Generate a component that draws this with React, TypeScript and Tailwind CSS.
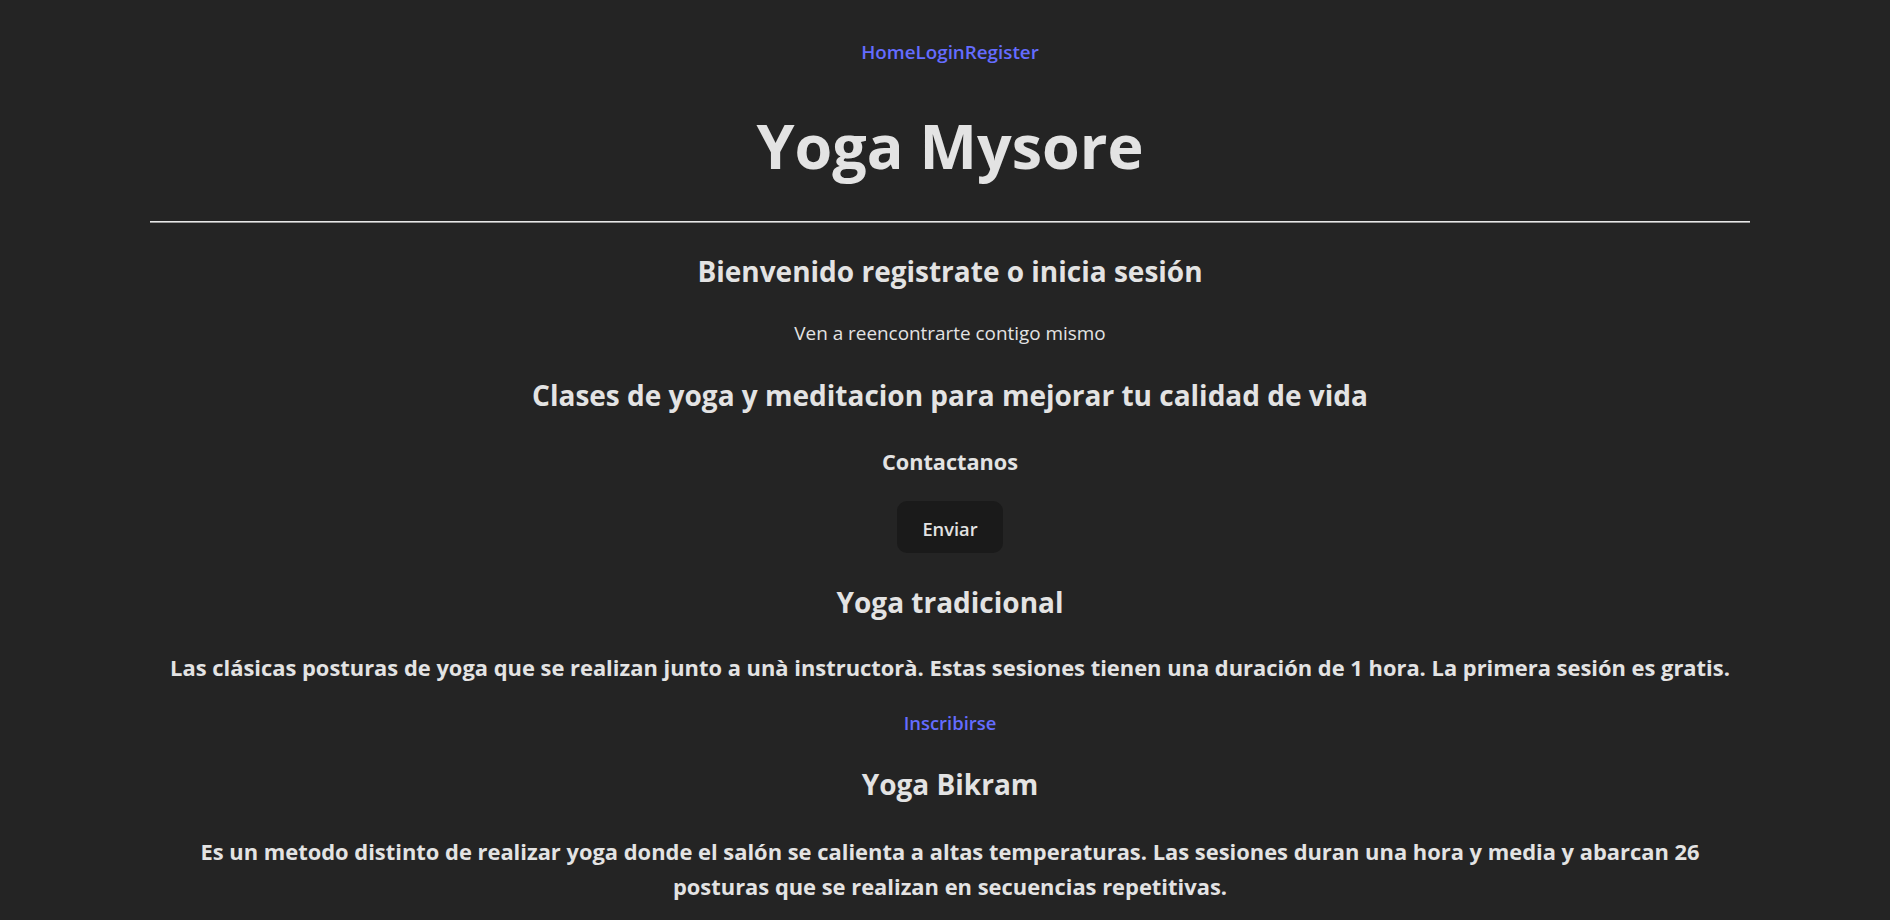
const font = "font-['Open_Sans',sans-serif]";

function Nav() {
  return (
    <nav className="flex justify-center text-[18.8px] leading-[30px] font-semibold text-[#646cff]">
      <a href="#">Home</a>
      <a href="#">Login</a>
      <a href="#">Register</a>
    </nav>
  );
}

function Clase({ title, children, mt }: { title: string; children: React.ReactNode; mt: string }) {
  return (
    <>
      <h2 className={`${mt} text-[28px] leading-[36px] font-bold`}>{title}</h2>
      {children}
    </>
  );
}

export default function App() {
  return (
    <div className={`min-h-screen bg-[#242424] text-[#e3e3e3] ${font}`}>
      <div className="mx-auto w-[1610px] pl-[10px]">
        <div className="flex w-[1600px] flex-col items-center pt-[37px] text-center">
          <Nav />
          <h1 className="mt-[44px] text-[61px] leading-[70px] font-bold">Yoga Mysore</h1>
          <hr className="mt-[40px] h-[2px] w-full border-t border-[#e8e8e8] bg-[#9a9a9a]" />

          <h2 className="mt-[30px] text-[28px] leading-[36px] font-bold">
            Bienvenido registrate o inicia sesión
          </h2>
          <p className="mt-[29px] text-[18.9px] leading-[30px]">Ven a reencontrarte contigo mismo</p>
          <h2 className="mt-[29px] text-[28px] leading-[36px] font-bold">
            Clases de yoga y meditacion para mejorar tu calidad de vida
          </h2>
          <h3 className="mt-[33px] text-[21.7px] leading-[32px] font-bold">Contactanos</h3>
          <button className="mt-[23px] rounded-[10px] bg-[#1a1a1a] px-[25px] pt-[14px] pb-[10px] text-[18.3px] leading-[28px] font-semibold">
            Enviar
          </button>

          <Clase title="Yoga tradicional" mt="mt-[31px]">
            <h3 className="mt-[30px] text-[21.9px] leading-[35px] font-bold">
              Las clásicas posturas de yoga que se realizan junto a unà instructorà. Estas sesiones tienen una
              duración de 1 hora. La primera sesión es gratis.
            </h3>
            <a href="#" className="mt-[23px] text-[18.4px] leading-[30px] font-semibold text-[#646cff]">
              Inscribirse
            </a>
          </Clase>

          <Clase title="Yoga Bikram" mt="mt-[28px]">
            <h3 className="mt-[32px] max-w-[1560px] text-[21.9px] leading-[35px] font-bold">
              Es un metodo distinto de realizar yoga donde el salón se calienta a altas temperaturas. Las sesiones
              duran una hora y media y abarcan 26 posturas que se realizan en secuencias repetitivas.
            </h3>
          </Clase>
        </div>
      </div>
    </div>
  );
}
